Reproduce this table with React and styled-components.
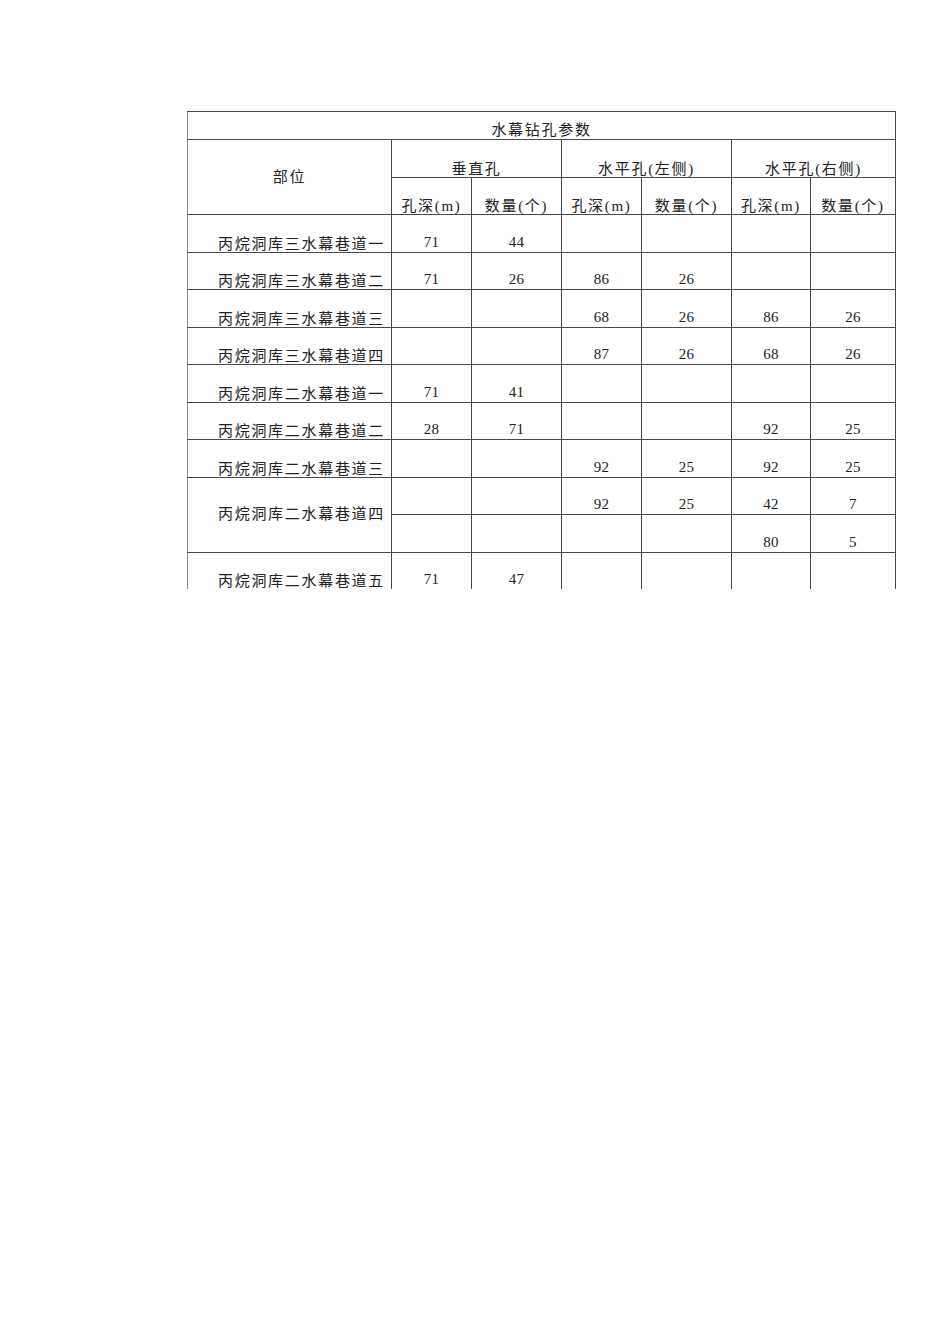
import React from "react";
import styled, { createGlobalStyle } from "styled-components";

const Global = createGlobalStyle`
  html, body { margin: 0; padding: 0; background: #ffffff; }
  body { font-family: "Liberation Serif", "Noto Sans CJK SC", serif; color: #222222; }
`;

const Page = styled.div`
  width: 950px;
  height: 1344px;
  padding: 111px 0 0 187px;
  box-sizing: border-box;
`;

const Clip = styled.div`
  width: 710px;
  height: 478px;
  overflow: hidden;
`;

const Table = styled.table`
  border-collapse: collapse;
  table-layout: fixed;
  width: 708px;
  font-size: 15px;
  letter-spacing: 1.7px;
`;

const Row = styled.tr`
  height: ${(p) => p.$h || 37.5}px;
`;

const Cell = styled.td`
  border: 1px solid #4a4a4a;
  padding: 0 ${(p) => (p.$align === "right" ? "6px" : "0")} ${(p) => p.$pb ?? 0}px 0;
  text-align: ${(p) => p.$align || "center"};
  vertical-align: ${(p) => p.$valign || "bottom"};
  line-height: 15px;
  white-space: nowrap;
  &:first-child { border-left-color: #8a8a8a; }
`;

const Num = styled.span`
  font-size: 15px;
  letter-spacing: 0.3px;
  display: inline-block;
  padding-bottom: 2px;
`;

const cols = [204, 80, 90, 80, 90, 79, 85];

const rows = [
  { name: "丙烷洞库三水幕巷道一", v: ["71", "44", "", "", "", ""] },
  { name: "丙烷洞库三水幕巷道二", v: ["71", "26", "86", "26", "", ""] },
  { name: "丙烷洞库三水幕巷道三", v: ["", "", "68", "26", "86", "26"] },
  { name: "丙烷洞库三水幕巷道四", v: ["", "", "87", "26", "68", "26"] },
  { name: "丙烷洞库二水幕巷道一", v: ["71", "41", "", "", "", ""] },
  { name: "丙烷洞库二水幕巷道二", v: ["28", "71", "", "", "92", "25"] },
  { name: "丙烷洞库二水幕巷道三", v: ["", "", "92", "25", "92", "25"] },
  {
    name: "丙烷洞库二水幕巷道四",
    v: ["", "", "92", "25", "42", "7"],
    extra: ["", "", "", "", "80", "5"],
  },
  { name: "丙烷洞库二水幕巷道五", v: ["71", "47", "", "", "", ""] },
];

const Values = ({ values }) =>
  values.map((x, i) => (
    <Cell key={i}>{x ? <Num>{x}</Num> : null}</Cell>
  ));

export default function App() {
  return (
    <>
      <Global />
      <Page>
        <Clip>
          <Table>
            <colgroup>
              {cols.map((w, i) => (
                <col key={i} style={{ width: w }} />
              ))}
            </colgroup>
            <tbody>
              <Row $h={28}>
                <Cell colSpan={7} $pb={1}>水幕钻孔参数</Cell>
              </Row>
              <Row>
                <Cell rowSpan={2} $valign="middle">部位</Cell>
                <Cell colSpan={2}>垂直孔</Cell>
                <Cell colSpan={2}>水平孔(左侧)</Cell>
                <Cell colSpan={2}>水平孔(右侧)</Cell>
              </Row>
              <Row>
                <Cell>孔深(m)</Cell>
                <Cell>数量(个)</Cell>
                <Cell>孔深(m)</Cell>
                <Cell>数量(个)</Cell>
                <Cell>孔深(m)</Cell>
                <Cell>数量(个)</Cell>
              </Row>
              {rows.map((r) => (
                <React.Fragment key={r.name}>
                  <Row>
                    <Cell
                      $align="right"
                      rowSpan={r.extra ? 2 : 1}
                      $valign={r.extra ? "middle" : "bottom"}
                    >
                      {r.name}
                    </Cell>
                    <Values values={r.v} />
                  </Row>
                  {r.extra && (
                    <Row>
                      <Values values={r.extra} />
                    </Row>
                  )}
                </React.Fragment>
              ))}
            </tbody>
          </Table>
        </Clip>
      </Page>
    </>
  );
}
